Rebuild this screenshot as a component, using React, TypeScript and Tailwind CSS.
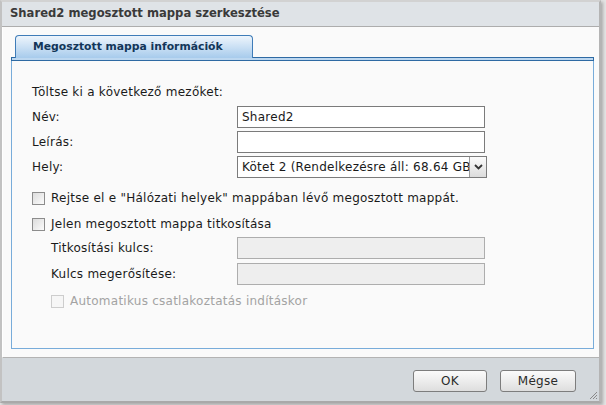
import React from 'react';

const font = "font-['DejaVu_Sans','Liberation_Sans',sans-serif]";

function Checkbox({ disabled = false }: { disabled?: boolean }) {
  return (
    <span
      className={`inline-block w-[13px] h-[13px] shrink-0 border ${
        disabled
          ? 'border-[#cdcdcd] bg-[#f6f6f6]'
          : 'border-[#8c8c8c] bg-gradient-to-br from-[#dcdcdc] to-[#fbfbfb]'
      }`}
    />
  );
}

function TextBox({ value = '', disabled = false }: { value?: string; disabled?: boolean }) {
  return (
    <div
      className={`w-[248px] h-[22px] border flex items-center px-[4px] text-[#1a1a1a] ${
        disabled ? 'border-[#adadad] bg-[#eeeeee]' : 'border-[#7b7b7b] bg-white'
      }`}
    >
      {value}
    </div>
  );
}

function Select() {
  return (
    <div className="w-[250px] h-[22px] border border-[#7b7b7b] bg-white flex items-stretch">
      <div className="flex-1 overflow-hidden whitespace-nowrap flex items-center pl-[4px] text-[#1a1a1a]">
        Kötet 2 (Rendelkezésre áll: 68.64 GB)
      </div>
      <div className="w-[17px] border-l border-[#9a9a9a] bg-gradient-to-b from-[#fbfbfb] to-[#dcdcdc] flex items-center justify-center">
        <svg width="9" height="6" viewBox="0 0 9 6">
          <path d="M1 1 L4.5 4.5 L8 1" stroke="#333" strokeWidth="1.8" fill="none" />
        </svg>
      </div>
    </div>
  );
}

function Row({ label, children }: { label: string; children: React.ReactNode }) {
  return (
    <div className="flex items-center h-[22px]">
      <div className="w-[205px] text-[#1a1a1a]">{label}</div>
      {children}
    </div>
  );
}

function Button({ label, w }: { label: string; w: string }) {
  return (
    <div
      className={`${w} h-[22px] rounded-[3px] border border-[#7d7d7d] bg-gradient-to-b from-[#fbfbfb] to-[#dedede] flex items-center justify-center text-[12px] tracking-[0.3px] text-[#2b2b2b]`}
    >
      {label}
    </div>
  );
}

export default function App() {
  return (
    <div className={`w-[606px] h-[405px] bg-[#e4e4e4] ${font} text-[12px] tracking-[0.25px]`}>
      <div className="w-[601px] h-[403px] flex flex-col border-l-2 border-t-2 border-r-2 border-b-2 border-l-[#c2c2c2] border-t-[#d2d2d2] border-r-[#b4b4b4] border-b-[#a9a9a9] shadow-[2px_2px_3px_rgba(0,0,0,0.25)]">
        {/* title bar */}
        <div className="h-[25px] bg-[#dfe3e7] border-b border-[#adadad] flex items-center pl-[8px] font-bold text-[11.6px] tracking-normal text-[#3a3a3a]">
          Shared2 megosztott mappa szerkesztése
        </div>

        {/* body */}
        <div className="flex-1 bg-[#fafafa] border-b border-[#b3b3b3] border-l border-l-white pt-[8px] pb-[8px] pl-[8px] pr-[5px] flex flex-col">
          <div className="flex">
            <div className="ml-[4px] w-[238px] h-[23px] rounded-t-[4px] border border-b-0 border-[#3f7cb8] bg-gradient-to-b from-[#eef5fc] to-[#a7cbec] flex items-center pl-[17px] font-bold text-[10.8px] tracking-normal text-[#133659] relative z-10 -mb-[1px]">
              Megosztott mappa információk
            </div>
          </div>
          <div className="h-[4px] border-t border-b border-[#2e6aa3] bg-[#bcd7f0] border-x border-x-[#2e6aa3]" />
          <div className="flex-1 border-x border-b border-[#78acda] pl-[20px] pt-[20px]">
            <div className="flex flex-col gap-[3px]">
              <div className="h-[22px] flex items-center text-[#1a1a1a]">Töltse ki a következő mezőket:</div>
              <Row label="Név:">
                <TextBox value="Shared2" />
              </Row>
              <Row label="Leírás:">
                <TextBox />
              </Row>
              <Row label="Hely:">
                <Select />
              </Row>
            </div>

            <div className="mt-[9px] h-[22px] flex items-center gap-[6px] text-[#1a1a1a]">
              <Checkbox />
              <span>Rejtse el e "Hálózati helyek" mappában lévő megosztott mappát.</span>
            </div>
            <div className="mt-[4px] h-[22px] flex items-center gap-[6px] text-[#1a1a1a]">
              <Checkbox />
              <span>Jelen megosztott mappa titkosítása</span>
            </div>
            <div className="mt-[2px] flex items-center h-[22px]">
              <div className="w-[205px] pl-[19px] text-[#1a1a1a]">Titkosítási kulcs:</div>
              <TextBox disabled />
            </div>
            <div className="mt-[4px] flex items-center h-[22px]">
              <div className="w-[205px] pl-[19px] text-[#1a1a1a]">Kulcs megerősítése:</div>
              <TextBox disabled />
            </div>
            <div className="mt-[5px] h-[22px] flex items-center gap-[6px] pl-[19px] text-[#a3a3a3]">
              <Checkbox disabled />
              <span>Automatikus csatlakoztatás indításkor</span>
            </div>
          </div>
        </div>

        {/* footer */}
        <div className="h-[43px] bg-[#d3d8dc] flex items-start justify-end gap-[13px] pt-[12px] pr-[23px] relative">
          <Button label="OK" w="w-[74px]" />
          <Button label="Mégse" w="w-[76px]" />
          <svg className="absolute right-[1px] bottom-[1px]" width="10" height="10" viewBox="0 0 10 10">
            <path d="M2 9 L9 2 M5 9 L9 5 M8 9 L9 8" stroke="#8a8a8a" strokeWidth="1" />
          </svg>
        </div>
      </div>
    </div>
  );
}
